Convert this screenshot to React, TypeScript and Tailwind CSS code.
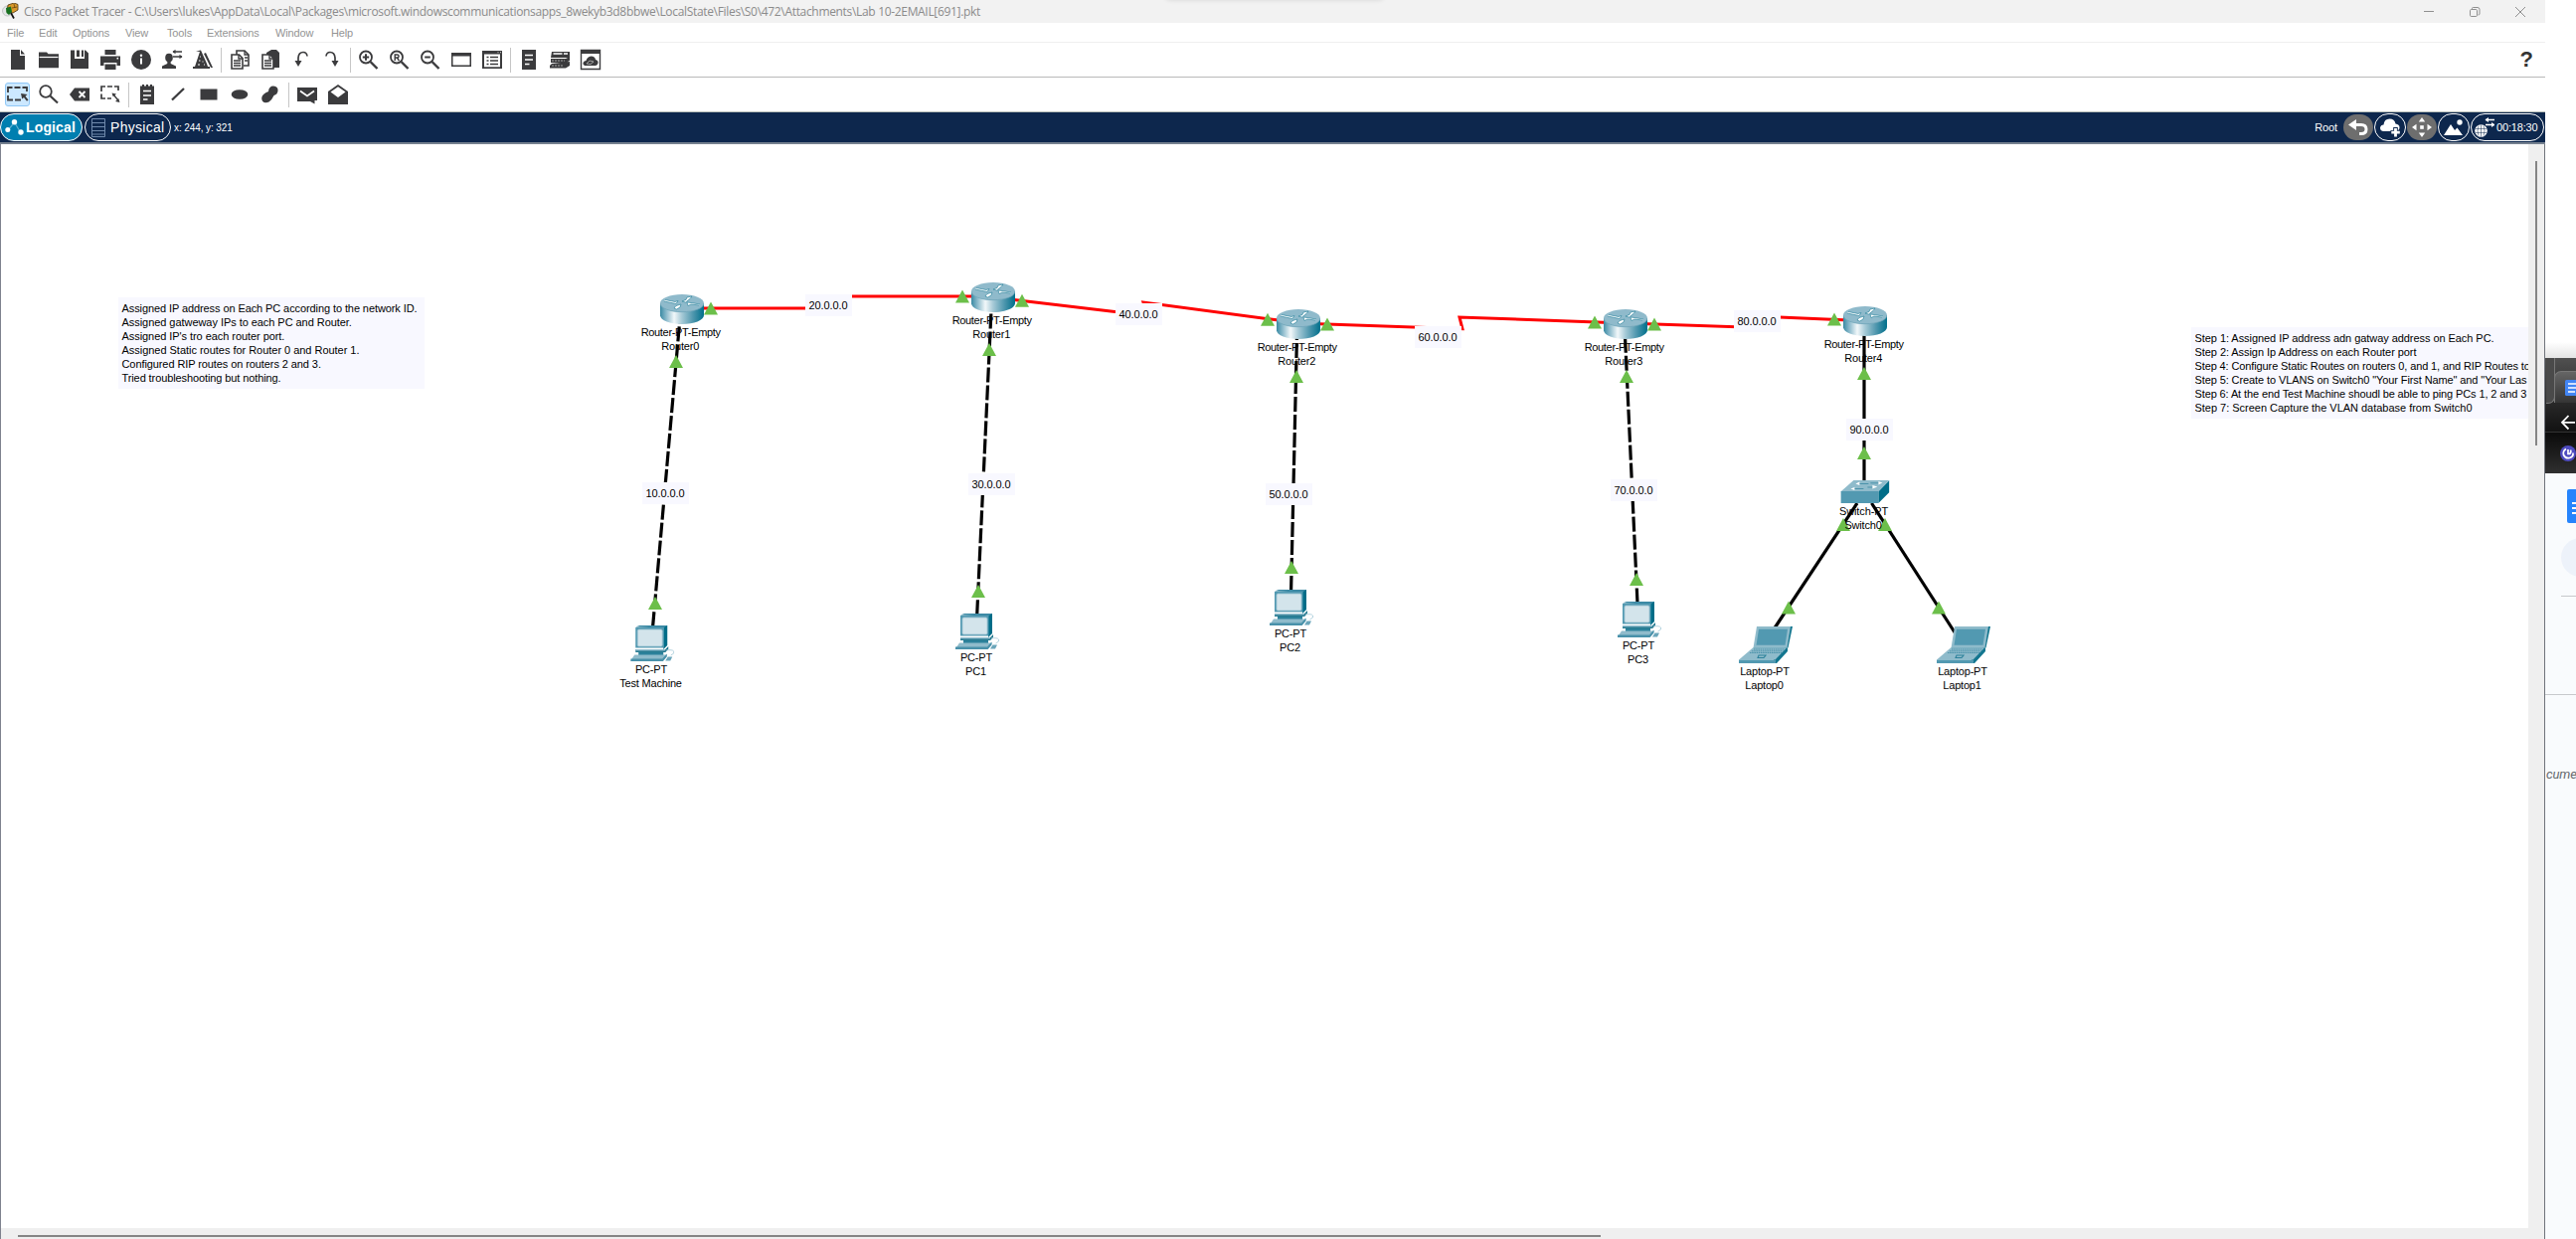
import type { ReactNode } from 'react';

const INK = '#3b3b3d';

/* ---------- toolbar icons, drawn on a 22×22 grid ---------- */

function Ico({ children }: { children: ReactNode }) {
  return (
    <svg width="22" height="22" viewBox="0 0 22 22" fill={INK} stroke="none">
      {children}
    </svg>
  );
}

const line = { fill: 'none', stroke: INK, strokeWidth: 2 };
const white = { fill: 'none', stroke: '#fff', strokeWidth: 1.4 };

const NewIcon = () => (
  <Ico>
    <path d="M4 1h9v6h5v14H4z" />
    <path d="M14 1l4 4.6h-4z" />
  </Ico>
);
const OpenIcon = () => (
  <Ico>
    <path d="M1 3.5h8l1.5 1.7H21v14H1z" />
    <path d="M1.5 8.5h19" stroke="#fff" strokeWidth="1.2" />
  </Ico>
);
const SaveIcon = () => (
  <Ico>
    <path d="M2 1.5h4V10h10V1.5h1L20 4.5V20H2z" />
    <path d="M8 1.5h3V8H8zM13 1.5h2V8h-2z" />
  </Ico>
);
const PrintIcon = () => (
  <Ico>
    <path d="M5.5 1h11v5h-11zM1 7.5h20v9.500h-3.500v-3H4.500v3H1z" />
    <path d="M5.500 15.500h11V21h-11z" />
    <circle cx="18.300" cy="9.700" r="0.900" fill="#fff" />
  </Ico>
);
const InfoIcon = () => (
  <Ico>
    <circle cx="11" cy="11" r="10" />
    <circle cx="11" cy="6.800" r="1.200" fill="#fff" />
    <path d="M11 9.500v6" stroke="#fff" strokeWidth="2" />
  </Ico>
);
const UserIcon = () => (
  <Ico>
    <ellipse cx="8" cy="9" rx="3.800" ry="4.300" />
    <path d="M6.300 12h3.400v3l5.300 2.500V20H1v-2.500L6.300 15z" />
    <path d="M12 3h9M12 8h9" stroke={INK} strokeWidth="1.500" />
    <path d="M14.500.8v4.400L11.500 3zM18.500 5.800v4.400l3-2.200z" />
  </Ico>
);
const WizardIcon = () => (
  <Ico>
    <path d="M8 3L4 2.500 9 1.500l6 13.500 1 3h2v2H1v-2h2z" />
    <path d="M12 5l2-1 7 15h-2z" />
    <path d="M8 8h1M7 12h1.500M10.500 13h1M6 16h2M12 16h1" stroke="#fff" strokeWidth="1.200" />
  </Ico>
);
const CopyIcon = () => (
  <Ico>
    <path d="M8 6V2h8l4 4v11h-5" fill="none" stroke={INK} strokeWidth="1.600" />
    <path d="M16 2v4h4M16 9h3M16 12h3" fill="none" stroke={INK} strokeWidth="1.300" />
    <path d="M3 6h7.500l3.500 3.500V20H3z" fill="#fff" stroke={INK} strokeWidth="1.600" />
    <path d="M10 6v4h4M5 12h7M5 14.500h7M5 17h7" fill="none" stroke={INK} strokeWidth="1.400" />
  </Ico>
);
const PasteIcon = () => (
  <Ico>
    <path d="M7 4l5-3h5l3 3v15H8z" />
    <path d="M3 6h7.500l3.500 3.500V20H3z" fill="#fff" stroke={INK} strokeWidth="1.600" />
    <path d="M10 6v4h4M5 12h7M5 14.500h7M5 17h7" fill="none" stroke={INK} strokeWidth="1.400" />
  </Ico>
);
const UndoIcon = () => (
  <Ico>
    <path d="M8 15V9q.5-5.500 5-5.500 3.500 0 4 4" {...line} strokeWidth={1.7} />
    <path d="M4.500 12h7L8 18z" />
  </Ico>
);
const RedoIcon = () => (
  <Ico>
    <path d="M14 15V9q-.5-5.500-5-5.500-3.500 0-4 4" {...line} strokeWidth={1.7} />
    <path d="M10.500 12h7L14 18z" />
  </Ico>
);
function ZoomGlyph({ children }: { children?: ReactNode }) {
  return (
    <Ico>
      <circle cx="8" cy="8.500" r="6" {...line} strokeWidth={1.8} />
      <path d="M12.500 13l7 7" {...line} strokeWidth={2.4} />
      {children}
    </Ico>
  );
}
const ZoomInIcon = () => (
  <ZoomGlyph>
    <path d="M4.800 8.500h6.400M8 5.300v6.400" {...line} />
  </ZoomGlyph>
);
const ZoomResetIcon = () => (
  <ZoomGlyph>
    <path d="M6.200 12V6h2.300q1.600 0 1.600 1.500T8.500 9H6.500M8.400 9l2 3" {...line} strokeWidth={1.4} />
  </ZoomGlyph>
);
const ZoomOutIcon = () => (
  <ZoomGlyph>
    <path d="M5.200 8.500h5.600" {...line} />
  </ZoomGlyph>
);
const WindowIcon = () => (
  <Ico>
    <path d="M1 4h20v14H1z" />
    <path d="M2.500 7.500h17v9h-17z" fill="#fff" />
  </Ico>
);
const ListIcon = () => (
  <Ico>
    <path d="M1 2h20v18H1z" />
    <path d="M3 5.500h16v12.800H3z" fill="#fff" />
    <path d="M9 8.500h8M9 12h8M9 15.500h8M5.500 8.500h2M5.500 12h2M5.500 15.500h2" {...line} strokeWidth={1.5} />
    <path d="M16.500 3.700h1M19 3.700h1" stroke="#fff" strokeWidth="0.800" />
  </Ico>
);
const NotesIcon = () => (
  <Ico>
    <path d="M4 1h14v20H4z" />
    <path d="M7 6.500h8M7 11h8M7 15.500h4.500" {...white} />
  </Ico>
);
const DevicesIcon = () => (
  <Ico>
    <path d="M3 3h18v6H2z" />
    <path d="M4.500 5h9M15 5h4" stroke="#fff" strokeWidth="1.600" />
    <path d="M2 10h15l4-2v4l-4 2H2zM3 15l18-2v4l-4 2.500H1V17z" />
    <path d="M3 12h13M3 17h12" stroke="#a5a5a5" strokeWidth="1" strokeDasharray="2 1" />
  </Ico>
);
const CloudIcon = () => (
  <Ico>
    <path d="M1.500 1.500h19v19h-19z" fill="#fff" stroke={INK} strokeWidth="1.400" />
    <path d="M1 1h20v4H1z" />
    <path d="M5 17q-2-1-1.500-3 1-2 3-2 1-4 5-4.500 4 0 4.500 3.500 3 .5 2.500 3.500-.5 2-2.500 2.500z" />
    <path d="M7 15l3-3 4 1-3 2.500z" fill="none" stroke="#bbb" strokeWidth="0.800" />
  </Ico>
);
const SelectIcon = () => (
  <Ico>
    <path d="M1 9V4h4.500M7.500 4h6M15.500 4H20v4M1 12v4.500h5M8 16.500h6" {...line} strokeWidth={1.8} />
    <path d="M14 10l6.500 1-2 1.700 3 3.800-1.500 1.200-3-3.700-1.800 1.600z" />
  </Ico>
);
const InspectIcon = () => (
  <Ico>
    <circle cx="8" cy="8" r="5.800" {...line} strokeWidth={1.8} />
    <path d="M12.500 12.500l7.500 7" {...line} strokeWidth={2.2} />
  </Ico>
);
const DeleteIcon = () => (
  <Ico>
    <path d="M1 11l5-6.500h15v13H6z" />
    <path d="M10.500 8l6 6M16.500 8l-6 6" {...white} strokeWidth={1.8} />
  </Ico>
);
const ResizeIcon = () => (
  <Ico>
    <path d="M2 8V3h4M8 3h5M15 3h4v4M2 10.500V15h4M8 15h4" {...line} strokeWidth={1.7} />
    <path d="M14 11l5 6" {...line} strokeWidth={1.4} />
    <path d="M12.500 9.500l4.500 1-3.200 2.700zM20.500 19l-4.500-1 3.200-3z" />
  </Ico>
);
const NotepadIcon = () => (
  <Ico>
    <path d="M4 2.500h2V1h2v1.500h2V1h2v1.500h2V1h2v1.500h2V21H4z" />
    <path d="M7 7.500h8M7 12h8M7 16h4.500" {...white} />
  </Ico>
);
const LineIcon = () => (
  <Ico>
    <path d="M5 16.500L17 5" {...line} strokeWidth={2.3} />
  </Ico>
);
const RectIcon = () => (
  <Ico>
    <path d="M2.500 5.500h17v11h-17z" />
  </Ico>
);
const EllipseIcon = () => (
  <Ico>
    <ellipse cx="11" cy="11" rx="8.300" ry="4.800" />
  </Ico>
);
const BlobIcon = () => (
  <Ico>
    <path d="M14 2.500q5 .5 4.500 5-.5 3.500-4 4.500-2 4.500-5 6.500-4 2-6.500-.8Q1 14 4 11q2-2 5-3 .5-5.500 5-5.500z" />
  </Ico>
);
const MailIcon = () => (
  <Ico>
    <path d="M1 4h20v13h-2.500v3.500L14 18H1z" />
    <path d="M4 7.500l7 5 7-5" {...white} strokeWidth={1.700} />
  </Ico>
);
const OpenMailIcon = () => (
  <Ico>
    <path d="M1 8l10-7 10 7v13H1z" />
    <path d="M3.500 8.500L11 3.200l7.500 5.300L11 14z" fill="#fff" />
  </Ico>
);

const MAIN_TOOLS = [
  [NewIcon, OpenIcon, SaveIcon, PrintIcon, InfoIcon, UserIcon, WizardIcon],
  [CopyIcon, PasteIcon, UndoIcon, RedoIcon],
  [ZoomInIcon, ZoomResetIcon, ZoomOutIcon, WindowIcon, ListIcon],
  [NotesIcon, DevicesIcon, CloudIcon],
];
const DRAW_TOOLS = [
  [SelectIcon, InspectIcon, DeleteIcon, ResizeIcon],
  [NotepadIcon, LineIcon, RectIcon, EllipseIcon, BlobIcon],
  [MailIcon, OpenMailIcon],
];

function ToolRow({ groups, active }: { groups: (() => ReactNode)[][]; active?: boolean }) {
  return (
    <div className="flex items-center pl-[2px]">
      {groups.map((group, g) => (
        <div key={g} className="flex items-center">
          {g > 0 && (
            <div className="flex w-[6px] justify-center">
              <div className="h-[25px] w-px bg-[#c6c6c6]" />
            </div>
          )}
          {group.map((Icon, i) => (
            <button key={i} className="flex w-[31px] items-center justify-center">
              {active && g === 0 && i === 0 ? (
                <span className="flex h-6 w-[25px] items-center justify-center rounded-[3px] border border-[#90c8f6] bg-[#cce8ff]">
                  <Icon />
                </span>
              ) : (
                <Icon />
              )}
            </button>
          ))}
        </div>
      ))}
    </div>
  );
}

/* ---------- devices ---------- */

function Router() {
  return (
    <svg width="44" height="30" viewBox="0 0 44 30">
      <defs>
        <linearGradient id="routerBody">
          <stop offset="0" stopColor="#3a8aa3" />
          <stop offset="0.120" stopColor="#7fb3c6" />
          <stop offset="0.320" stopColor="#f2f8fa" />
          <stop offset="0.500" stopColor="#a5c9d6" />
          <stop offset="0.750" stopColor="#4f97ae" />
          <stop offset="1" stopColor="#006f8b" />
        </linearGradient>
      </defs>
      <path d="M0 9v12c0 5 10 9 22 9s22-4 22-9V9z" fill="url(#routerBody)" />
      <ellipse cx="22" cy="9" rx="22" ry="9" fill="#8fbacb" />
      <path d="M0 9c0 5 10 8.700 22 8.700S44 14 44 9" fill="none" stroke="#6ba4b8" strokeWidth="0.700" />
      <path d="M5 5.500l10 2 3-1-2 3-12-2.500M39 11l-8-1-3 1.500-1-3.500 4 .5 9 1.500" fill="#fff" stroke="#1b7b95" strokeWidth="0.600" />
      <path d="M22 7l4-1.500 1-2.500 5-1-2 2.500-4.500 3.500zM14 14l2-2.500 5-1.500-1 3-3.500 2z" fill="#fff" stroke="#1b7b95" strokeWidth="0.600" />
    </svg>
  );
}

function Pc() {
  return (
    <svg width="44" height="36" viewBox="0 0 44 36">
      <path d="M9 0h28v20l-4 4V2z" fill="#006d88" />
      <path d="M5 1.500L9 0h28l-4 2.500z" fill="#3c8aa5" />
      <path d="M5 2h28.500v20.500H5z" fill="#5299b1" />
      <rect x="7" y="4" width="25" height="17" rx="1.500" fill="#d3e4eb" stroke="#9cc2d0" strokeWidth="0.800" />
      <path d="M5 24h30l3-3v3l-3 3H5z" fill="#25798f" />
      <path d="M5 24h30v1.500H5z" fill="#8dbacb" />
      <path d="M8 27h25v3H8z" fill="#2b819a" />
      <path d="M4 29.500h33l-4 6H0z" fill="#8fbbcb" />
      <path d="M0 33.500h32l4.500-5v3l-4 4.500H0z" fill="#4991aa" />
      <path d="M36 25q6-1 7.500 1t-3 4" fill="none" stroke="#aecfdb" strokeWidth="0.900" />
      <path d="M37.500 31.500h4.500l-2 4h-5z" fill="#6aa5ba" />
    </svg>
  );
}

function Laptop() {
  return (
    <svg width="54" height="37" viewBox="0 0 54 37">
      <path d="M51 0h3l-4.500 21.500h-3z" fill="#13768f" />
      <path d="M18 0h34l-3.500 21.500H14.500z" fill="#8fbbcb" />
      <path d="M20 2.700h29l-2.500 16H17.500z" fill="#5299b1" />
      <path d="M14 21.500h35v3.500L38 37h-3v-4z" fill="#13768f" />
      <path d="M14 21.500h34L36.500 33.500H0z" fill="#8fbbcb" />
      <path d="M15 23h31M13 24.800h31.500M11 26.500h32" stroke="#4a92aa" strokeWidth="1" strokeDasharray="1.500 0.700" />
      <path d="M0 33.500h37V37H0z" fill="#5299b1" />
      <path d="M20 29h7l-2 2.500h-6z" fill="none" stroke="#2b819a" strokeWidth="1.100" />
    </svg>
  );
}

function Switch() {
  return (
    <svg width="49" height="23" viewBox="0 0 49 23">
      <path d="M49 0v12L38 23V11z" fill="#006d88" />
      <path d="M13 0h36L38 11.500H0z" fill="#8fbbcb" />
      <path d="M0 11h38v12H0z" fill="#5299b1" />
      <path d="M18 3.500h10M30 2.800h10M13 8.500h10M27 7h7" stroke="#4a92aa" strokeWidth="1" />
      <path d="M15 3.500l4-2v3.500zM42 2.500l-4-1.500v3.500zM10 8.500l4-1.500v3zM37 6.500L32 5v3.500z" fill="#fff" />
    </svg>
  );
}

const KINDS = {
  router: { Draw: Router, type: 'Router-PT-Empty', w: 44, tracking: 'tracking-[-0.33px]' },
  pc: { Draw: Pc, type: 'PC-PT', w: 44, tracking: 'tracking-[-0.19px]' },
  laptop: { Draw: Laptop, type: 'Laptop-PT', w: 54, tracking: 'tracking-[-0.2px]' },
  switch: { Draw: Switch, type: 'Switch-PT', w: 49, tracking: 'tracking-[-0.1px]' },
};

const DEVICES: { kind: keyof typeof KINDS; name: string; x: number; y: number }[] = [
  { kind: 'router', name: 'Router0', x: 663.7, y: 296 },
  { kind: 'router', name: 'Router1', x: 976.7, y: 284 },
  { kind: 'router', name: 'Router2', x: 1283.7, y: 311 },
  { kind: 'router', name: 'Router3', x: 1612.7, y: 311 },
  { kind: 'router', name: 'Router4', x: 1853.7, y: 308 },
  { kind: 'pc', name: 'Test Machine', x: 634, y: 629 },
  { kind: 'pc', name: 'PC1', x: 961, y: 617 },
  { kind: 'pc', name: 'PC2', x: 1277, y: 593 },
  { kind: 'pc', name: 'PC3', x: 1627, y: 605 },
  { kind: 'switch', name: 'Switch0', x: 1851, y: 483 },
  { kind: 'laptop', name: 'Laptop0', x: 1749, y: 630 },
  { kind: 'laptop', name: 'Laptop1', x: 1948, y: 630 },
];

const NETWORKS: [string, number, number][] = [
  ['10.0.0.0', 646, 485],
  ['20.0.0.0', 810, 296],
  ['30.0.0.0', 974, 476],
  ['40.0.0.0', 1122, 305],
  ['50.0.0.0', 1273, 486],
  ['60.0.0.0', 1423, 328],
  ['70.0.0.0', 1620, 482],
  ['80.0.0.0', 1744, 312],
  ['90.0.0.0', 1857, 421],
];

const SERIAL = [
  '700,310 833,310 828,298 985,298',
  '1020,301.5 1155,317.5 1150,304 1290,322.6',
  '1320,325.5 1471,330.8 1468,319 1620,324.4',
  '1650,325.500 1768,329.500 1763,318 1860,322',
];
const CROSSOVER = [
  '656.600,630.200 683.500,325',
  '982.700,618.200 997,312',
  '1298.600,594 1304.400,340',
  '1647,606.500 1634.600,340',
];
const STRAIGHT = ['1875,336 1875,485', '1868,506 1784,633', '1882.500,506 1968,639'];

// Apex of every link-state marker.
const MARKERS: [number, number][] = [
  [715, 303.500], [680, 357], [659, 600], [968, 291.500], [1028, 295.700], [995, 345], [984, 588],
  [1275, 314.700], [1335, 319.500], [1304, 372], [1299, 564], [1604, 317.500], [1664, 319.500],
  [1636, 372], [1646, 576], [1845, 314.500], [1875, 369], [1875, 449], [1854, 521], [1896, 521],
  [1799, 604.500], [1950, 604.500],
];

function Cables() {
  return (
    <svg className="absolute inset-0" width="2542" height="1090" viewBox="1 145 2542 1090">
      <g fill="none" stroke="#ff0000" strokeWidth="3">
        {SERIAL.map((p) => (
          <polyline key={p} points={p} />
        ))}
      </g>
      <g fill="none" stroke="#000" strokeWidth="3.200">
        {CROSSOVER.map((p) => (
          <polyline key={p} points={p} strokeDasharray="15 3" />
        ))}
        {STRAIGHT.map((p) => (
          <polyline key={p} points={p} />
        ))}
      </g>
      <g fill="#6cbf4a">
        {MARKERS.map(([x, y]) => (
          <path key={`${x}-${y}`} d={`M${x} ${y}l7 13h-14z`} />
        ))}
      </g>
    </svg>
  );
}

function Note({ lines, x, y, className }: { lines: [string, string][]; x: number; y: number; className: string }) {
  return (
    <div
      className={`absolute overflow-hidden bg-[#f8f8ff] pt-1 pb-1 pl-1 ${className}`}
      style={{ left: x - 1, top: y - 145 }}
    >
      {lines.map(([text, tracking]) => (
        <p key={text} className={`h-[14px] whitespace-nowrap leading-[14px] ${tracking}`}>
          {text}
        </p>
      ))}
    </div>
  );
}

function Canvas() {
  return (
    <div className="relative flex-1 overflow-hidden bg-white text-[11px] text-black">
      <Note
        x={118.5}
        y={299}
        className="h-[92px] w-[308px]"
        lines={[
          ['Assigned IP address on Each PC according to the network ID.', 'tracking-[-0.093px]'],
          ['Assigned gatweway IPs to each PC and Router.', 'tracking-[-0.05px]'],
          ["Assigned IP's tro each router port.", 'tracking-[-0.06px]'],
          ['Assigned Static routes for Router 0 and Router 1.', 'tracking-[-0.027px]'],
          ['Configured RIP routes on routers 2 and 3.', 'tracking-[-0.09px]'],
          ['Tried troubleshooting but nothing.', 'tracking-[-0.1px]'],
        ]}
      />
      <Note
        x={2203.5}
        y={329}
        className="h-[92px] w-[339px]"
        lines={[
          ['Step 1: Assigned IP address adn gatway address on Each PC.', 'tracking-[-0.057px]'],
          ['Step 2: Assign Ip Address on each Router port', 'tracking-[-0.06px]'],
          ['Step 4: Configure Static Routes on routers 0, and 1, and RIP Routes to', 'tracking-[-0.115px]'],
          ['Step 5: Create to VLANS on Switch0 "Your First Name" and "Your Las', 'tracking-[-0.1px]'],
          ['Step 6: At the end Test Machine shoudl be able to ping PCs 1, 2 and 3', 'tracking-[-0.115px]'],
          ['Step 7: Screen Capture the VLAN database from Switch0', 'tracking-[-0.02px]'],
        ]}
      />
      <Cables />
      {DEVICES.map(({ kind, name, x, y }) => {
        const { Draw, type, w, tracking } = KINDS[kind];
        return (
          <div
            key={name}
            className="absolute flex -translate-x-1/2 flex-col items-center"
            style={{ left: x - 1 + w / 2, top: y - 145 }}
          >
            <Draw />
            <span className={`mt-[1px] mr-[2px] h-[14px] whitespace-nowrap leading-[14px] ${tracking}`}>{type}</span>
            <span className="mr-[3px] h-[14px] whitespace-nowrap leading-[14px] tracking-[-0.19px]">{name}</span>
          </div>
        );
      })}
      {NETWORKS.map(([label, x, y]) => (
        <span
          key={label}
          className="absolute h-[22px] w-[47px] bg-[#f8f8ff] pl-[3.500px] leading-[22px] tracking-[-0.1px]"
          style={{ left: x - 1, top: y - 145 }}
        >
          {label}
        </span>
      ))}
    </div>
  );
}

/* ---------- window chrome ---------- */

function TitleBar() {
  return (
    <div className="flex h-[23px] items-center justify-between bg-[#f2f2f2] pl-[2px]">
      <div className="flex items-center gap-[5px]">
        <svg width="17" height="17" viewBox="0 0 17 17">
          <circle cx="5.500" cy="8" r="5" fill="#e3e6e6" stroke="#c0c4c4" strokeWidth="1" />
          <path d="M6 2l6-2 4 1.500V7l-5 3-6-1z" fill="#d9992b" stroke="#4b3310" strokeWidth="0.800" />
          <path d="M4 5l5-1.500L10 9l-3 3-2.500-2z" fill="#17711f" />
          <path d="M9 10l3 5.500" stroke="#111" strokeWidth="1.700" />
          <path d="M12 1l1 4M15 4l-5 1" stroke="#5c3b0c" strokeWidth="0.700" />
        </svg>
        <span className="whitespace-nowrap font-['Open_Sans',sans-serif] text-[12px] leading-[23px] tracking-[-0.324px] text-[#8b8b8b]">
          {'Cisco Packet Tracer - C:\\Users\\lukes\\AppData\\Local\\Packages\\microsoft.windowscommunicationsapps_8wekyb3d8bbwe\\LocalState\\Files\\S0\\472\\Attachments\\Lab 10-2EMAIL[691].pkt'}
        </span>
      </div>
      <div className="flex items-center gap-[34px] pr-[19px]">
        <svg width="12" height="12" viewBox="0 0 12 12" fill="none" stroke="#8f8f8f">
          <path d="M1 5.500h10" />
        </svg>
        <svg width="12" height="12" viewBox="0 0 12 12" fill="none" stroke="#8f8f8f">
          <rect x="1.500" y="3.500" width="7" height="7" rx="1.200" />
          <path d="M3.500 3V2.500q0-1 1-1H9q2 0 2 2V8q0 1-1.500 1" />
        </svg>
        <svg width="12" height="12" viewBox="0 0 12 12" fill="none" stroke="#8f8f8f">
          <path d="M1 1l10 10M11 1L1 11" />
        </svg>
      </div>
    </div>
  );
}

const MENUS: [string, string][] = [
  ['File', 'w-[32px]'],
  ['Edit', 'w-[34px]'],
  ['Options', 'w-[53px]'],
  ['View', 'w-[42px]'],
  ['Tools', 'w-[40px]'],
  ['Extensions', 'w-[69px]'],
  ['Window', 'w-[56px]'],
  ['Help', 'w-[24px]'],
];

function MenuBar() {
  return (
    <div className="flex h-5 items-center border-b border-[#efefef] bg-white pt-px pl-[7px] text-[11px] tracking-[-0.13px] text-[#949494]">
      {MENUS.map(([label, width]) => (
        <span key={label} className={width}>
          {label}
        </span>
      ))}
    </div>
  );
}

function NavBar() {
  return (
    <div className="flex h-8 items-center justify-between border-b-2 border-[#75808f] bg-[#0d274d] text-white">
      <div className="flex items-center">
        <button className="flex h-7 w-[83px] items-center rounded-full border border-white bg-[#007fb0] pl-1">
          <svg width="19" height="18" viewBox="0 0 19 18" fill="#fff">
            <path d="M3 12L9.500 4l6 10" fill="none" stroke="#5fb0d0" strokeWidth="1.200" />
            <circle cx="2.800" cy="11.500" r="2.500" />
            <circle cx="9.500" cy="3.800" r="2.700" />
            <circle cx="16" cy="14" r="2.700" />
          </svg>
          <span className="ml-[2px] text-[14px] font-bold tracking-[0.14px]">Logical</span>
        </button>
        <button className="ml-[2px] flex h-7 w-[87px] items-center rounded-full border border-white pl-[6px]">
          <svg width="14" height="19" viewBox="0 0 14 19" fill="none" stroke="#6f89ab">
            <path d="M.5.500h13v18H.5zM.5 4.500h13M.5 8.500h13M.5 12.500h13M.5 16h13" />
          </svg>
          <span className="ml-[5px] text-[14px] tracking-[0.3px]">Physical</span>
        </button>
        <span className="ml-[3px] text-[10px] tracking-[-0.1px]">x: 244, y: 321</span>
      </div>
      <div className="flex items-center pr-px">
        <span className="mr-[6px] text-[11px] tracking-[-0.1px]">Root</span>
        <button className="flex h-[26px] w-[30px] items-center justify-center rounded-[13px] bg-[#6e6e6e]">
          <svg width="22" height="20" viewBox="0 0 22 20">
            <path d="M5 7.500h9q5 0 5 4.500t-5 4.500h-2" fill="none" stroke="#fff" strokeWidth="3" />
            <path d="M9 2v11L1 7.500z" fill="#fff" />
          </svg>
        </button>
        <button className="ml-px flex h-7 w-8 items-center justify-center rounded-[14px] border border-white">
          <svg width="22" height="22" viewBox="0 0 22 22" fill="#fff">
            <path d="M4 15q-3-.5-3-3.500.5-3 3.500-3 .5-6 6-6 5 0 6 5 4 .5 4 3.500 0 3-2 3h-5v1z" />
            <path d="M16.500 11v10M11.500 16.200H22" stroke="#0d274d" strokeWidth="4.600" />
            <path d="M16.500 12v8.500M12.300 16.200h8.500" stroke="#fff" strokeWidth="2.800" />
          </svg>
        </button>
        <button className="ml-px flex h-[26px] w-[30px] items-center justify-center rounded-[13px] bg-[#6e6e6e]">
          <svg width="20" height="20" viewBox="0 0 20 20" fill="#fff">
            <path d="M10 0l3.200 4.500H6.800zM10 20l3.200-4.500H6.800zM0 10l4.500-3.200v6.400zM20 10l-4.500-3.200v6.400z" />
            <rect x="8.200" y="8.200" width="3.600" height="3.600" />
          </svg>
        </button>
        <button className="ml-px flex h-7 w-8 items-center justify-center rounded-[14px] border border-white">
          <svg width="22" height="18" viewBox="0 0 22 18" fill="#fff">
            <path d="M1 17l7-11 4 6 2.500-2.500L20 17z" />
            <circle cx="17" cy="4" r="2.700" />
          </svg>
        </button>
        <button className="ml-px flex h-7 w-[74px] items-center rounded-[14px] border border-white pl-[3px]">
          <svg width="20" height="22" viewBox="0 0 20 22" fill="#fff">
            <circle cx="6.500" cy="14.500" r="6.300" />
            <path d="M1 12.500h11M1 16.500h11M6.500 8.500v12M4 9.500q-2 5 0 10M9 9.500q2 5 0 10" fill="none" stroke="#0d274d" strokeWidth="0.500" />
            <path d="M11 3.500h9M11 8.500h9" stroke="#fff" strokeWidth="1.700" />
            <path d="M14 1v5l-3.500-2.500zM17 6v5l3.500-2.500z" />
          </svg>
          <span className="ml-[2px] text-[11px] tracking-[-0.17px]">00:18:30</span>
        </button>
      </div>
    </div>
  );
}

/* ---------- the browser window partly visible behind ---------- */

function BrowserSliver() {
  return (
    <div className="flex h-full w-[31px] flex-col overflow-hidden bg-white">
      <div className="h-[344px]" />
      <div className="h-4 bg-gradient-to-b from-white to-[#e4e4e4]" />
      <div className="relative h-[74px] bg-gradient-to-b from-[#505050] to-[#121212]">
        <div className="absolute top-0 left-px h-[46px] w-[9px] rounded-br-[7px] border-r border-b border-[#777] bg-[#4a4a4a]" />
        <div className="absolute top-[13px] left-[9px] h-8 w-[22px] rounded-tl-[7px] border-t border-l border-[#777] bg-gradient-to-b from-[#656565] to-[#353535]" />
        <svg className="absolute top-[22px] left-[20px]" width="11" height="16" viewBox="0 0 11 16">
          <rect width="16" height="16" rx="1.500" fill="#4285f4" />
          <path d="M3 4h9M3 8h9M3 12h7" stroke="#fff" strokeWidth="1.700" />
        </svg>
        <svg className="absolute top-[57px] left-[15px]" width="16" height="16" viewBox="0 0 16 16" fill="none" stroke="#fff" strokeWidth="1.800">
          <path d="M8.500 1L2 7.800l6.500 6.700M2 7.800h13" />
        </svg>
      </div>
      <div className="flex h-[42px] items-center border-t border-[#333] bg-gradient-to-b from-[#0b0b0b] to-[#303030] pl-[15px]">
        <svg width="16" height="16" viewBox="0 0 16 16">
          <circle cx="8" cy="8" r="8" fill="#4f4cc0" />
          <path d="M8 4v4.500h1.500q2-1.500 1-4M6 3.500q-3.500 2-2.500 6 2 4 6 3t3.500-5" fill="none" stroke="#fff" strokeWidth="1.700" />
        </svg>
      </div>
      <div className="flex h-[223px] flex-col border-b border-[#c7c9cc] bg-[#f9fbfd]">
        <div className="mt-4 ml-[22px] flex h-[34px] w-[9px] flex-col justify-center gap-[3px] rounded-l-[2px] bg-[#2684fc] pt-1 pl-[5px]">
          <span className="h-[2px] bg-white" />
          <span className="h-[2px] bg-white" />
          <span className="h-[2px] bg-white" />
        </div>
        <div className="mt-[15px] ml-4 h-[39px] w-[40px] shrink-0 rounded-l-full bg-[#edf2fa]" />
        <div className="mt-[19px] ml-4 h-px bg-[#c7c9cc]" />
      </div>
      <div className="flex-1 bg-[#f9fbfd] pt-[70px] pl-px">
        <span className="block font-[Roboto,sans-serif] text-[13px] leading-5 tracking-[-0.1px] text-[#666a6e] italic">cume</span>
      </div>
    </div>
  );
}

export default function App() {
  return (
    <div className="flex h-[1246px] w-[2591px] overflow-hidden bg-white font-['Liberation_Sans',Arial,sans-serif]">
      <div className="relative flex w-[2560px] flex-col">
        <TitleBar />
        <div className="absolute -top-[10px] left-[1172px] h-[10px] w-[220px] rounded-lg shadow-[0_0_5px_rgba(0,0,0,0.12)]" />
        <MenuBar />
        <div className="flex h-[35px] items-center justify-between border-b border-[#b9b9b9]">
          <ToolRow groups={MAIN_TOOLS} />
          <span className="mr-[12px] text-[22px] leading-none font-bold text-[#333]">?</span>
        </div>
        <div className="flex h-[35px] items-center border-b border-[#b9bfb9]">
          <ToolRow groups={DRAW_TOOLS} active />
        </div>
        <NavBar />
        <div className="flex flex-1 border-l border-[#7e828e]">
          <div className="flex flex-1 flex-col">
            <Canvas />
            <div className="h-[11px] bg-[#efefef] pt-[7px] pl-[17px]">
              <div className="h-[2px] w-[1592px] bg-[#858585]" />
            </div>
          </div>
          <div className="w-4 bg-[#efefef] pt-[17px] pl-[7px]">
            <div className="h-[286px] w-[2px] bg-[#858585]" />
          </div>
          <div className="w-px bg-[#70747c]" />
        </div>
      </div>
      <BrowserSliver />
    </div>
  );
}
